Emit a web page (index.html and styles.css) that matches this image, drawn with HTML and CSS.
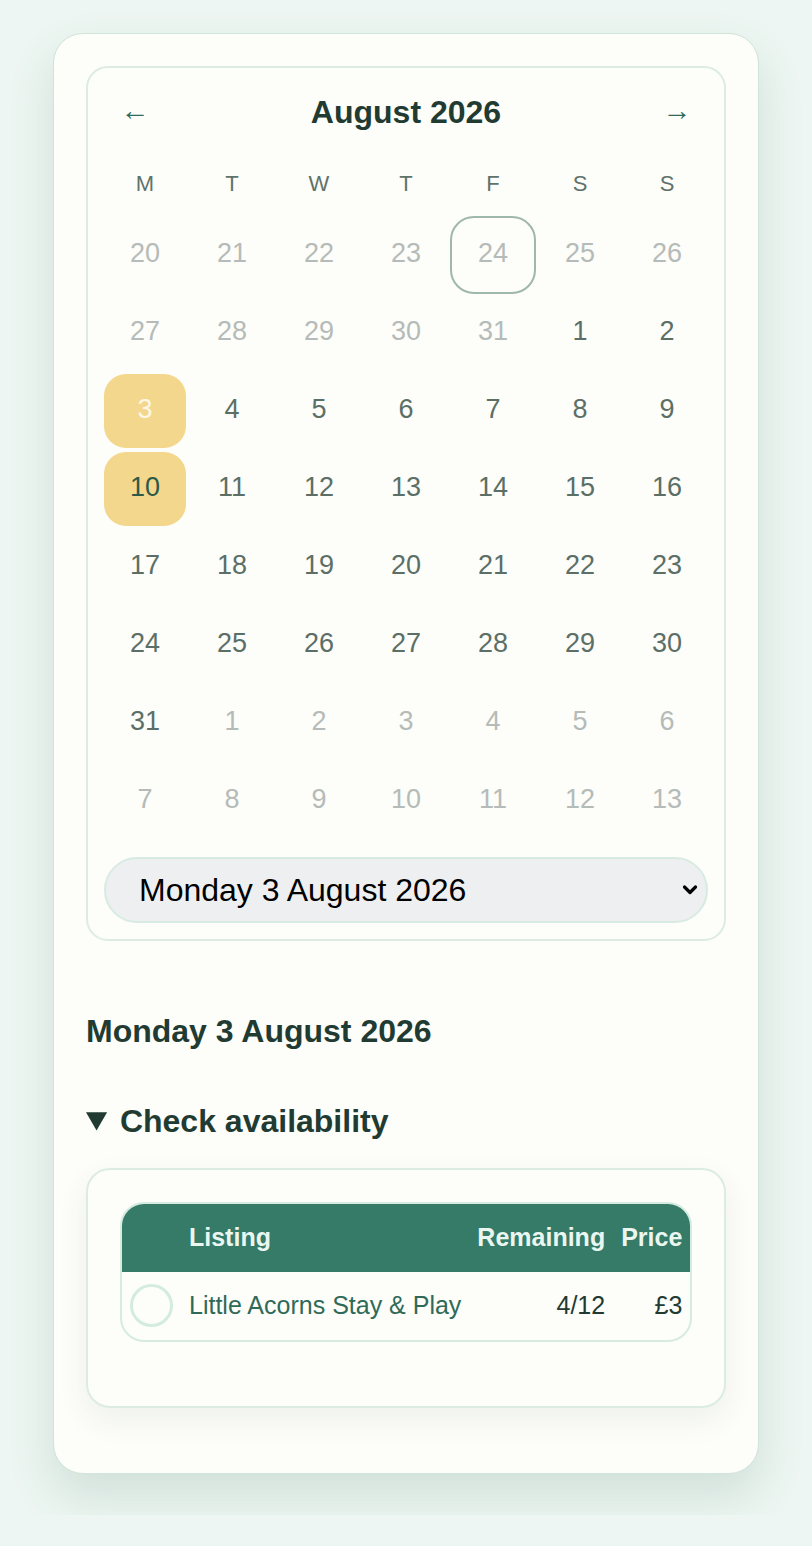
FILE: index.html
```html
<!DOCTYPE html>
<html lang="en">
<head>
<meta charset="utf-8">
<title>Availability</title>
<link rel="stylesheet" href="styles.css">
</head>
<body>
<main class="page">
  <section class="shell">
    <div class="calendar">
      <div class="cal-head">
        <button class="nav" type="button" aria-label="Previous month">&larr;</button>
        <h2 class="month">August 2026</h2>
        <button class="nav" type="button" aria-label="Next month">&rarr;</button>
      </div>
      <div class="weekdays">
        <span>M</span><span>T</span><span>W</span><span>T</span><span>F</span><span>S</span><span>S</span>
      </div>
      <div class="days">
        <span class="day out">20</span><span class="day out">21</span><span class="day out">22</span><span class="day out">23</span><span class="day out today">24</span><span class="day out">25</span><span class="day out">26</span>
        <span class="day out">27</span><span class="day out">28</span><span class="day out">29</span><span class="day out">30</span><span class="day out">31</span><span class="day">1</span><span class="day">2</span>
        <span class="day selected">3</span><span class="day">4</span><span class="day">5</span><span class="day">6</span><span class="day">7</span><span class="day">8</span><span class="day">9</span>
        <span class="day marked">10</span><span class="day">11</span><span class="day">12</span><span class="day">13</span><span class="day">14</span><span class="day">15</span><span class="day">16</span>
        <span class="day">17</span><span class="day">18</span><span class="day">19</span><span class="day">20</span><span class="day">21</span><span class="day">22</span><span class="day">23</span>
        <span class="day">24</span><span class="day">25</span><span class="day">26</span><span class="day">27</span><span class="day">28</span><span class="day">29</span><span class="day">30</span>
        <span class="day">31</span><span class="day out">1</span><span class="day out">2</span><span class="day out">3</span><span class="day out">4</span><span class="day out">5</span><span class="day out">6</span>
        <span class="day out">7</span><span class="day out">8</span><span class="day out">9</span><span class="day out">10</span><span class="day out">11</span><span class="day out">12</span><span class="day out">13</span>
      </div>
      <div class="select-wrap">
        <select class="date-select">
          <option>Monday 3 August 2026</option>
          <option>Monday 10 August 2026</option>
        </select>
        <svg class="chev" width="16" height="12" viewBox="0 0 16 12" aria-hidden="true">
          <path d="M2.5 3 L8 8.5 L13.5 3" fill="none" stroke="#000" stroke-width="3.2" stroke-linecap="round" stroke-linejoin="round"/>
        </svg>
      </div>
    </div>

    <h2 class="date-title">Monday 3 August 2026</h2>

    <details class="avail" open>
      <summary>Check availability</summary>
      <div class="avail-card">
        <table class="listings">
          <thead>
            <tr>
              <th class="c-radio"></th>
              <th class="c-name">Listing</th>
              <th class="c-num">Remaining</th>
              <th class="c-num">Price</th>
            </tr>
          </thead>
          <tbody>
            <tr>
              <td class="c-radio"><span class="radio"></span></td>
              <td class="c-name">Little Acorns Stay &amp; Play</td>
              <td class="c-num">4/12</td>
              <td class="c-num">£3</td>
            </tr>
          </tbody>
        </table>
      </div>
    </details>
  </section>
</main>
</body>
</html>
```

FILE: styles.css
```css
html {
  background: #edf6f2;
}
body {
  margin: 0;
  font-family: "Liberation Sans", Arial, sans-serif;
  color: #1f3a31;
  background: #edf6f2;
}
.page {
  padding: 33px 53px 41px;
}
.shell {
  background: #fdfdf9;
  border: 1px solid #cfe4da;
  border-radius: 30px;
  padding: 32px;
  box-shadow: 0 22px 46px rgba(60, 110, 90, 0.16);
}
.calendar {
  border: 2px solid #dcece4;
  border-radius: 22px;
  padding: 16px;
}
.cal-head {
  display: flex;
  align-items: center;
  justify-content: space-between;
  height: 56px;
  margin-bottom: 20px;
}
.nav {
  width: 62px;
  height: 56px;
  border: 0;
  background: transparent;
  color: #2f6b5a;
  font-family: "Liberation Sans", Arial, sans-serif;
  font-size: 29px;
  padding: 0 0 4px;
}
.month {
  margin: 0;
  font-size: 32px;
  font-weight: 700;
  color: #213b32;
}
.weekdays {
  display: grid;
  grid-template-columns: repeat(7, 1fr);
  column-gap: 5px;
  height: 48px;
  margin-bottom: 10px;
}
.weekdays span {
  display: flex;
  align-items: center;
  justify-content: center;
  font-size: 22px;
  color: #5f736b;
}
.days {
  display: grid;
  grid-template-columns: repeat(7, 1fr);
  column-gap: 5px;
  row-gap: 4px;
}
.day {
  box-sizing: border-box;
  height: 74px;
  padding-bottom: 4px;
  display: flex;
  align-items: center;
  justify-content: center;
  font-size: 27px;
  color: #5b6f67;
  border-radius: 22px;
}
.day.out {
  color: #b5bbb8;
}
.day.today {
  outline: 2px solid #9fb7ad;
  outline-offset: 0;
}
.day.selected {
  background: #f3d78c;
  color: #fdf8e6;
}
.day.marked {
  background: #f3d78c;
  color: #2c5a49;
}
.select-wrap {
  position: relative;
  margin-top: 19px;
}
.date-select {
  display: block;
  width: 100%;
  height: 66px;
  border: 2px solid #d8ebe2;
  border-radius: 33px;
  background: #eeeff0;
  color: #000;
  font-family: "Liberation Sans", Arial, sans-serif;
  font-size: 32px;
  padding: 0 40px 0 33px;
  appearance: none;
  -webkit-appearance: none;
}
.chev {
  position: absolute;
  right: 10px;
  top: 27px;
  pointer-events: none;
}
.date-title {
  margin: 72px 0 0;
  font-size: 32px;
  line-height: 1.15;
  font-weight: 700;
  color: #213b32;
}
.avail {
  margin: 53px 0 33px;
}
.avail summary {
  font-size: 32px;
  line-height: 1.15;
  font-weight: 700;
  color: #213b32;
  cursor: pointer;
}
.avail-card {
  margin-top: 28px;
  border: 2px solid #dcece4;
  border-radius: 24px;
  padding: 32px;
  background: #fdfdf9;
  box-shadow: 0 12px 30px rgba(60, 100, 85, 0.08);
}
.listings {
  width: 100%;
  border-collapse: separate;
  border-spacing: 0;
  border: 2px solid #d6ebe2;
  border-radius: 24px;
  overflow: hidden;
  margin-bottom: 32px;
  font-size: 25px;
}
.listings th {
  background: #357b68;
  color: #eaf6f0;
  font-weight: 700;
  height: 68px;
  padding: 0 8px;
  white-space: nowrap;
}
.listings td {
  height: 68px;
  padding: 0 8px;
  white-space: nowrap;
  color: #233a32;
}
.c-radio {
  width: 43px;
}
.c-name {
  text-align: left;
  width: 100%;
}
.listings td.c-name {
  color: #2f6a59;
}
.c-num {
  text-align: right;
}
.radio {
  display: block;
  width: 43px;
  height: 43px;
  box-sizing: border-box;
  border: 3px solid #d4ebe1;
  border-radius: 50%;
}
```
